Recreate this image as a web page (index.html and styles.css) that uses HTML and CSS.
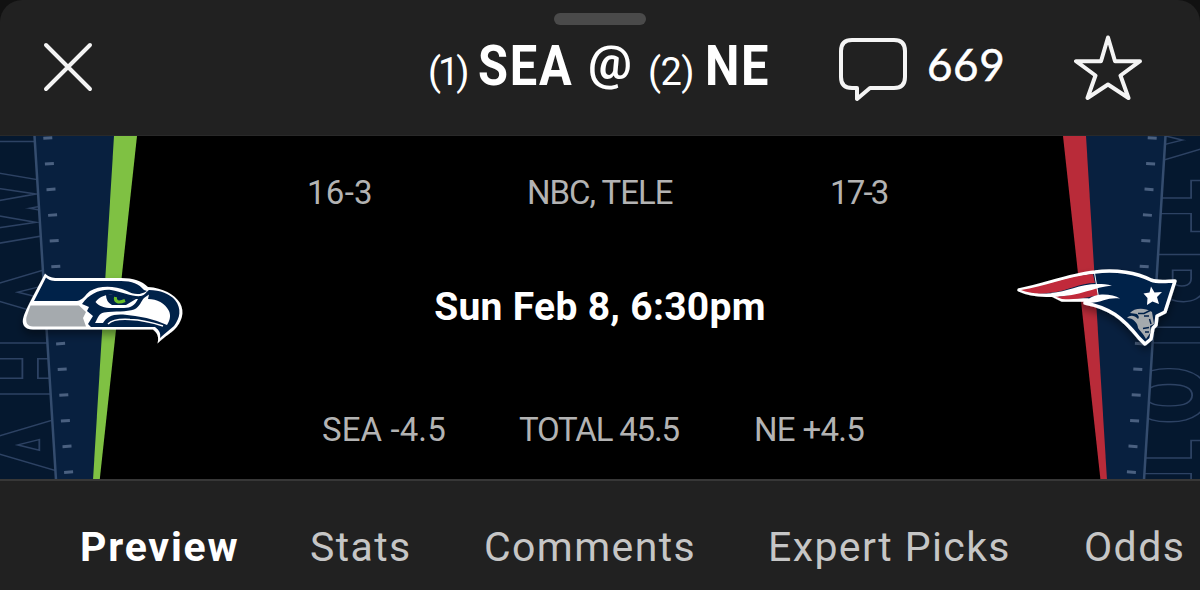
FILE: index.html
```html
<!DOCTYPE html>
<html lang="en">
<head>
    <meta charset="UTF-8">
    <meta name="viewport" content="width=device-width, initial-scale=1.0">
    <title>SEA @ NE</title>
    <link rel="stylesheet" href="styles.css">
</head>
<body>
    <div class="sheet">
        <header class="header">
            <div class="grabber"></div>
            <div class="header-row">
                <svg class="close" width="52" height="52" viewBox="0 0 52 52">
                    <path d="M4 4L48 48M48 4L4 48"/>
                </svg>
                <h1 class="title">
                    <span class="seed seed-away">(1)</span>
                    <span class="abbr abbr-away">SEA</span>
                    <span class="at">@</span>
                    <span class="seed seed-home">(2)</span>
                    <span class="abbr abbr-home">NE</span>
                </h1>
                <svg class="bubble" width="68" height="64" viewBox="0 0 68 64">
                    <path d="M13 2H55Q66 2 66 13V39Q66 50 55 50H31L18 61V50H13Q2 50 2 39V13Q2 2 13 2Z"/>
                </svg>
                <span class="count">669</span>
                <svg class="star" width="68" height="66" viewBox="0 0 68 66">
                    <path d="M34 2.500L41 26.200L66 26.200L46.500 40.500L54.500 63L34 49.500L13.500 63L21.500 40.500L2 26.200L27 26.200Z"/>
                </svg>
            </div>
        </header>

        <main class="banner">
            <svg class="side" width="190" height="343" viewBox="0 136 190 343">
                <defs>
                    <clipPath id="outerLeft"><path d="M0 136H34L56 480H0Z"/></clipPath>
                    <filter id="soft" x="-20%" y="-20%" width="140%" height="160%">
                        <feDropShadow dx="0" dy="5" stdDeviation="4" flood-opacity=".4"/>
                    </filter>
                </defs>
                <path fill="#05182f" d="M0 136H34L56 480H0Z"/>
                <path fill="#08203f" d="M34 136H115L94 480H56Z"/>
                <path fill="#7fc143" d="M114 136H137L99.700 480H93Z"/>
                <g clip-path="url(#outerLeft)">
                    <text class="team-name" transform="translate(68 445) rotate(-90) scale(.8 1)" x="0 95.600 191 296 408">AHAWK</text>
                </g>
                <path class="sideline" d="M34.500 136L56 480"/>
                <path class="ticks" d="M47.700 136.500L69.100 480"/>
                <!-- Seahawks -->
                <g filter="url(#soft)">
                    <path fill="#fff" d="M45 273.500C49 277 52 278 57 278H121C133 278 142 281 148 287C163 288 174 294 180 303C185 312 182 322 174 330C168 335 163 338 157.500 343.500C159 338 158 333 153 329.500H33C25 329.500 22 325 23 319C24 314 27 308 30 302Z"/>
                    <path fill="#03204a" d="M46 277.500C49 280.500 53 281 59 281H121C132 281 139 284 144 290L147 291C139 296 133 294 127 291C113 285 99 286 90 291C85 295 83 300 77 301H34Z"/>
                    <path fill="#a5aaae" d="M30.500 305.500H79L86 312L83 318L86 326.500H33C27 326.500 25.500 322 26.500 317Z"/>
                    <path fill="#03204a" d="M82 304C89 294 100 289 111 290C122 292 133 297 141 296C145 295 146 292 149 290C160 290 170 294 175 300C182 309 180 318 174 326C168 331 164 334 160 338C161 333 159 330 155 327H91L88 324L93 316L87 311L89 307Z"/>
                    <path fill="#fff" d="M95 323C98 318 99 313 104 312.500C115 311 127 312 134 309.500C140 307 141 301 144 298L149 294.500L148 299C157 299 165 303 169 311C171 316 170 320 167 325C154 319 140 316 123 314.500C111 314 107 317 103 323Z"/>
                    <path fill="#fff" d="M95.500 302C99 297 106 294 113 295C124 297 131 299 138 299C135 305 131 308 124 308H112C104 308 99 306 95.500 302Z"/>
                    <path fill="#03204a" d="M106 295L115 294L136 299L126 305H112Q106 302 106 295Z"/>
                    <path class="eye" d="M115.500 297C114.500 302.500 119 303 125 300.500"/>
                    <path class="beak-light" d="M108 324C113 319 122 319 130 319.500C144 320 154 323 163 326"/>
                </g>
            </svg>

            <section class="info">
                <div class="row records">
                    <span class="away-record">16-3</span>
                    <span class="network">NBC, TELE</span>
                    <span class="home-record">17-3</span>
                </div>
                <div class="kickoff">Sun Feb 8, 6:30pm</div>
                <div class="row lines">
                    <span class="away-line">SEA -4.5</span>
                    <span class="total">TOTAL 45.5</span>
                    <span class="home-line">NE +4.5</span>
                </div>
            </section>

            <svg class="side" width="190" height="343" viewBox="1010 136 190 343">
                <defs>
                    <clipPath id="outerRight"><path d="M1166 136H1200V480H1144Z"/></clipPath>
                </defs>
                <path fill="#05182f" d="M1166 136H1200V480H1144Z"/>
                <path fill="#08203f" d="M1085 136H1166L1144 480H1106Z"/>
                <path fill="#b92b39" d="M1063 136H1086L1107 480H1100.500Z"/>
                <g clip-path="url(#outerRight)">
                    <text class="team-name" transform="translate(1132 136) rotate(90) scale(.8 1)" x="5 87.500 177.500 249 324 412.500">ATRIOT</text>
                </g>
                <path class="sideline" d="M1165.500 136L1144 480"/>
                <path class="ticks" d="M1152.300 136.500L1130.900 480"/>
                <!-- Patriots -->
                <g filter="url(#soft)">
                    <path class="pats-outline" d="M1019 290C1042 286 1068 275 1095 272C1116 269 1137 273 1151 280C1159 283 1168 281 1175 281L1165 312L1157 316L1156 325L1153 328L1151 339L1145 344L1139 338C1122 317 1110 308 1085 303L1088 300H1062L1052 295Q1032 296 1019 290Z"/>
                    <path fill="#c12c3a" d="M1021 290C1043 287 1068 276 1093 274L1095 283C1080 283 1067 291 1052 292.500C1039 294.500 1029 293 1021 290Z"/>
                    <path fill="#c12c3a" d="M1055 296.500C1070 297 1082 290 1097 288L1098 295.500C1087 297 1080 300 1062 299Z"/>
                    <path fill="#fff" d="M1051 293C1070 292 1085 280 1112 285.500C1094 287 1078 297 1054 296.500ZM1084 303C1088 298 1096 294 1103 294.500C1110 294.500 1116 296 1120 298.500C1108 297 1103 302 1090 303Z"/>
                    <path class="divider" d="M1094.500 273L1098.500 297"/>
                    <path fill="#fff" d="M1151 286.500L1154.500 292.500L1162 292L1157 297L1159 304L1152.500 301.500L1147 305L1147.500 298L1143.500 293.500L1149.500 292.500Z"/>
                    <path fill="#a5aaae" d="M1130 313C1134 308 1144 307 1152 312L1154 324L1150 326L1151 332L1146 339C1143 333 1140 331 1138 328C1138 323 1133 318 1127 318C1130 315 1134 315 1138 319Q1140 317 1137 314Z"/>
                    <path class="face" d="M1138 313.500H1144L1151 310M1144 316H1149M1149.500 319L1151 324M1143 328.500L1149 327.500M1145 332L1149 332"/>
                </g>
            </svg>
        </main>

        <nav class="tabs">
            <span class="tab active">Preview</span>
            <span class="tab stats">Stats</span>
            <span class="tab comments">Comments</span>
            <span class="tab picks">Expert Picks</span>
            <span class="tab odds">Odds</span>
        </nav>
    </div>
</body>
</html>
```

FILE: styles.css
```css
* {
    box-sizing: border-box;
}
body {
    margin: 0;
    background-color: #111;
    font-family: Roboto, sans-serif;
    color: #fff;
    overflow: hidden;
}
.sheet {
    width: 1200px;
    height: 590px;
    background-color: #212121;
    border-radius: 22px 22px 0 0;
    overflow: hidden;
}
.header {
    height: 136px;
    border-bottom: 1px solid #292929;
    padding-top: 13px;
}
.grabber {
    width: 92px;
    height: 12px;
    margin: 0 auto;
    border-radius: 6px;
    background-color: #4a4a4a;
}
.header-row {
    display: flex;
    align-items: flex-start;
    padding-left: 42px;
}
.header-row svg {
    fill: none;
    stroke: #f4f4f4;
    stroke-width: 4;
    stroke-linecap: round;
    stroke-linejoin: round;
    flex: none;
}
.close {
    margin-top: 16px;
}
.title {
    display: flex;
    align-items: baseline;
    width: 411px;
    margin: 9px 0 0 334px;
    line-height: 64px;
    font-size: 56px;
    font-weight: bold;
    white-space: nowrap;
}
.seed {
    font-size: 38px;
    font-weight: 400;
    width: 50px;
    letter-spacing: -0.5px;
}
.seed-away {
    letter-spacing: -3px;
}
.abbr {
    transform: scaleX(.87);
    transform-origin: 0 0;
    letter-spacing: 2px;
}
.abbr-away {
    width: 110px;
}
.at {
    width: 60px;
    font-size: 49px;
    font-weight: 600;
    transform: translateY(-6px);
}
.seed-home {
    width: 57px;
}
.bubble {
    margin-top: 13px;
}
.count {
    margin: 11px 0 0 20px;
    width: 147px;
    font-family: Lato, sans-serif;
    font-size: 44px;
    line-height: 56px;
    letter-spacing: 0.6px;
    -webkit-text-stroke: 0.5px #fff;
}
.star {
    margin-top: 10px;
}
.banner {
    height: 343px;
    display: flex;
    background-color: #000;
}
.side {
    flex: none;
}
.team-name {
    font-size: 104px;
    font-weight: 900;
    text-anchor: middle;
    fill: #05182f;
    stroke: #2d4263;
    stroke-width: 3.6;
    paint-order: stroke;
}
.sideline {
    stroke: #344c6e;
    stroke-width: 2.5;
}
.ticks {
    stroke: #4a6080;
    stroke-width: 9;
    stroke-dasharray: 3 22.75;
}
.eye {
    fill: none;
    stroke: #69be28;
    stroke-width: 3;
}
.beak-light {
    fill: none;
    stroke: #fff;
    stroke-width: 1.5;
}
.pats-outline {
    fill: #03204a;
    stroke: #fff;
    stroke-width: 3.5;
    stroke-linejoin: round;
}
.divider {
    stroke: #fff;
    stroke-width: 1;
}
.face {
    fill: none;
    stroke: #03204a;
    stroke-width: 1.5;
}
.info {
    flex: 1;
    display: flex;
    flex-direction: column;
    padding-top: 36px;
}
.row {
    display: flex;
    font-size: 33px;
    line-height: 42px;
    color: #b3b3b3;
    white-space: nowrap;
}
.records {
    padding-left: 117px;
}
.away-record {
    width: 220px;
    letter-spacing: 0.3px;
}
.network {
    width: 303px;
    letter-spacing: -1px;
}
.home-record {
    letter-spacing: -1.8px;
}
.kickoff {
    margin-top: 71px;
    text-align: center;
    font-size: 39px;
    font-weight: bold;
    line-height: 44px;
    letter-spacing: 0.3px;
}
.lines {
    margin-top: 80px;
    padding-left: 132px;
}
.away-line {
    width: 197px;
    letter-spacing: 0.1px;
}
.total {
    width: 235px;
    letter-spacing: -1.2px;
}
.home-line {
    letter-spacing: -0.7px;
}
.tabs {
    height: 111px;
    border-top: 2px solid #373737;
    display: flex;
    padding: 42px 0 0 80px;
    font-size: 41px;
    font-weight: 450;
    line-height: 48px;
    letter-spacing: 1.4px;
    color: #c6c6c6;
    white-space: nowrap;
}
.tab {
    flex: none;
}
.active {
    width: 230px;
    color: #fff;
    font-weight: bold;
    letter-spacing: 1.8px;
}
.stats {
    width: 174px;
}
.comments {
    width: 284px;
}
.picks {
    width: 316px;
}
```
